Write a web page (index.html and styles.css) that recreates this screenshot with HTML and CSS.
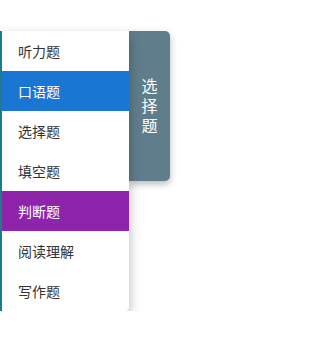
FILE: index.html
```html
<!DOCTYPE html>
<html lang="zh">
<head>
<meta charset="utf-8">
<link rel="stylesheet" href="styles.css">
</head>
<body>
<div class="wrap">
  <ul class="menu">
    <li class="item">听力题</li>
    <li class="item active-blue">口语题</li>
    <li class="item">选择题</li>
    <li class="item">填空题</li>
    <li class="item active-purple">判断题</li>
    <li class="item">阅读理解</li>
    <li class="item">写作题</li>
  </ul>
  <div class="tab"><span class="tab-text">选择题</span></div>
</div>
</body>
</html>
```
FILE: styles.css
```css
html, body {
  margin: 0;
  padding: 0;
  background: #ffffff;
}
body {
  font-family: "Noto Sans CJK SC", "Microsoft YaHei", sans-serif;
}
.wrap {
  display: flex;
  align-items: flex-start;
  padding-top: 31px;
}
.menu {
  list-style: none;
  margin: 0;
  padding: 0;
  width: 127px;
  border-left: 2px solid #1f7a8c;
  background: #fff;
  border-radius: 0 0 4px 0;
  box-shadow: 0 5px 12px rgba(0, 0, 0, 0.3);
  position: relative;
  z-index: 1;
}
.item {
  height: 40px;
  line-height: 40px;
  padding-left: 16px;
  font-size: 14px;
  color: #333;
}
.active-blue {
  background: #1976d2;
  color: #fff;
}
.active-purple {
  background: #8e24aa;
  color: #fff;
}
.tab {
  width: 41px;
  height: 150px;
  box-sizing: border-box;
  padding-top: 4px;
  background: #607d8b;
  color: #fff;
  border-radius: 0 5px 5px 0;
  box-shadow: 0 3px 7px rgba(0, 0, 0, 0.28);
  display: flex;
  align-items: center;
  justify-content: center;
}
.tab-text {
  writing-mode: vertical-rl;
  text-orientation: upright;
  font-size: 16px;
  line-height: 20px;
  letter-spacing: 4px;
}
```
